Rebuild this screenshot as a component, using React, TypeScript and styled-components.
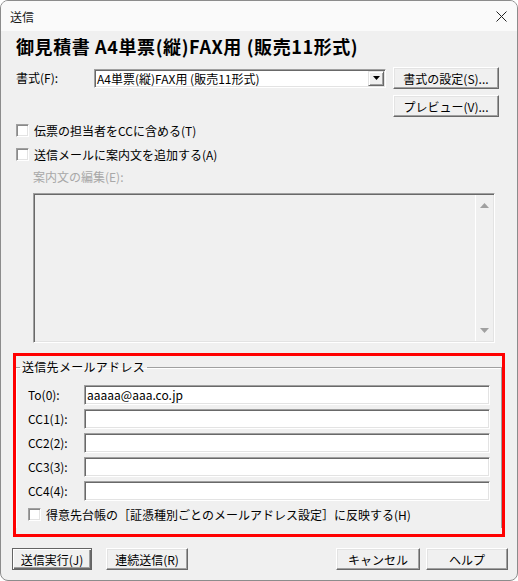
import React from 'react';
import styled, { createGlobalStyle } from 'styled-components';

const GlobalStyle = createGlobalStyle`
  html, body {
    margin: 0;
    padding: 0;
    background: #ffffff;
  }
  body {
    font-family: "Noto Sans CJK JP", "Liberation Sans", sans-serif;
    font-size: 12px;
    color: #000;
  }
`;

const Window = styled.div`
  width: 518px;
  height: 581px;
  box-sizing: border-box;
  border: 1px solid #8c8c8c;
  border-radius: 8px;
  background: #f0f0f0;
  overflow: hidden;
  display: flex;
  flex-direction: column;
`;

const TitleBar = styled.div`
  height: 30px;
  flex-shrink: 0;
  display: flex;
  align-items: center;
  justify-content: space-between;
  padding: 0 9px 0 9px;
  background: #fafafa;
  font-size: 12px;
  color: #1a1a1a;
`;

const CloseIcon = styled.svg`
  width: 11px;
  height: 11px;
  margin-right: 1px;
`;

const Heading = styled.h1`
  margin: 3px 0 0 15px;
  height: 24px;
  line-height: 24px;
  font-size: 18px;
  font-weight: 700;
  letter-spacing: 0.6px;
  white-space: nowrap;
`;

const TopGrid = styled.div`
  display: grid;
  grid-template-columns: 71px 292px 106px;
  grid-template-rows: 22px 22px;
  column-gap: 7px;
  row-gap: 6px;
  align-items: center;
  margin: 9px 0 0 15px;
`;

const FieldLabel = styled.span`
  white-space: nowrap;
  line-height: 20px;
`;

const Combo = styled.div`
  height: 19px;
  box-sizing: border-box;
  display: flex;
  align-items: stretch;
  background: #fff;
  border: 1px solid;
  border-color: #a0a0a0 #fff #fff #a0a0a0;
  box-shadow: inset 1px 1px 0 #696969, inset -1px -1px 0 #e3e3e3;
`;

const ComboText = styled.span`
  flex: 1;
  padding-left: 2px;
  line-height: 17px;
  white-space: nowrap;
  overflow: hidden;
`;

const DropButton = styled.span`
  width: 16px;
  margin: 1px 1px 1px 0;
  box-sizing: border-box;
  display: flex;
  align-items: center;
  justify-content: center;
  background: #f0f0f0;
  border: 1px solid;
  border-color: #e3e3e3 #696969 #696969 #e3e3e3;
  box-shadow: inset 1px 1px 0 #fff, inset -1px -1px 0 #a0a0a0;
`;

const Button = styled.button<{ $width: number; $default?: boolean }>`
  width: ${p => p.$width}px;
  height: 22px;
  box-sizing: border-box;
  padding: 0;
  background: #f0f0f0;
  font-family: inherit;
  font-size: 12px;
  color: #000;
  white-space: nowrap;
  border: 1px solid;
  border-color: ${p => (p.$default ? '#646464' : '#fff #696969 #696969 #fff')};
  box-shadow: ${p =>
    p.$default
      ? 'inset 1px 1px 0 #fff, inset -1px -1px 0 #696969, inset -2px -2px 0 #a0a0a0'
      : 'inset -1px -1px 0 #a0a0a0, inset 1px 1px 0 #e3e3e3'};
`;

const CheckRow = styled.label<{ $top: number; $left: number }>`
  display: flex;
  align-items: center;
  gap: 5px;
  height: 20px;
  margin: ${p => p.$top}px 0 0 ${p => p.$left}px;
  white-space: nowrap;
`;

const CheckBox = styled.span`
  width: 13px;
  height: 13px;
  flex-shrink: 0;
  box-sizing: border-box;
  background: #fff;
  border: 1px solid;
  border-color: #a0a0a0 #fff #fff #a0a0a0;
  box-shadow: inset 1px 1px 0 #8a8a8a, inset -1px -1px 0 #e3e3e3;
`;

const DisabledLabel = styled.div`
  margin: 3px 0 0 32px;
  height: 20px;
  line-height: 20px;
  color: #a8a8a8;
`;

const MemoBox = styled.div`
  margin: 6px 0 0 32px;
  width: 462px;
  height: 150px;
  box-sizing: border-box;
  display: flex;
  background: #f0f0f0;
  border: 1px solid;
  border-color: #a0a0a0 #fff #fff #a0a0a0;
  box-shadow: inset 1px 1px 0 #696969, inset -1px -1px 0 #e3e3e3;
`;

const MemoArea = styled.div`
  flex: 1;
`;

const ScrollBar = styled.div`
  width: 17px;
  margin: 1px 1px 1px 0;
  display: flex;
  flex-direction: column;
  justify-content: space-between;
  align-items: center;
  border-left: 1px solid #fff;
  padding: 8px 0 8px;
`;

const RedBox = styled.div`
  margin: 10px 0 0 12px;
  width: 492px;
  height: 184px;
  box-sizing: border-box;
  border: 3px solid #ff0000;
`;

const GroupBox = styled.fieldset`
  margin: 3px 0 0 0;
  padding: 0 0 4px 4px;
  border: none;
  border-top: 1px solid #a0a0a0;
  border-right: 1px solid #a0a0a0;
  box-shadow: inset 1px 1px 0 #fff;
  min-width: 0;
`;

const Legend = styled.legend`
  padding: 0 2px;
  line-height: 16px;
  font-size: 12px;
  letter-spacing: 0.3px;
`;

const AddressGrid = styled.div`
  display: grid;
  grid-template-columns: 56px 406px;
  grid-auto-rows: 20px;
  row-gap: 4px;
  align-items: center;
  margin: 10px 0 0 8px;
`;

const TextInput = styled.div`
  height: 20px;
  box-sizing: border-box;
  padding-left: 2px;
  line-height: 18px;
  background: #fff;
  border: 1px solid;
  border-color: #a0a0a0 #fff #fff #a0a0a0;
  box-shadow: inset 1px 1px 0 #696969, inset -1px -1px 0 #e3e3e3;
`;

const Footer = styled.div`
  display: flex;
  align-items: center;
  margin-top: 11px;
  padding: 0 9px 0 11px;
`;

const Spacer = styled.div<{ $width?: number }>`
  ${p => (p.$width ? `width: ${p.$width}px;` : 'flex: 1;')}
`;

const Arrow = ({ dir, color, w = 9, h = 5 }: { dir: 'up' | 'down'; color: string; w?: number; h?: number }) => (
  <svg width={w} height={h} viewBox={`0 0 ${w} ${h}`}>
    <polygon
      points={dir === 'up' ? `${w / 2},0 ${w},${h} 0,${h}` : `0,0 ${w},0 ${w / 2},${h}`}
      fill={color}
    />
  </svg>
);

const addresses = [
  { label: 'To(0):', value: 'aaaaa@aaa.co.jp' },
  { label: 'CC1(1):', value: '' },
  { label: 'CC2(2):', value: '' },
  { label: 'CC3(3):', value: '' },
  { label: 'CC4(4):', value: '' },
];

export default function App() {
  return (
    <>
      <GlobalStyle />
      <Window>
        <TitleBar>
          <span>送信</span>
          <CloseIcon viewBox="0 0 11 11">
            <path d="M0.5 0.5 L10.5 10.5 M10.5 0.5 L0.5 10.5" stroke="#222" strokeWidth="1" />
          </CloseIcon>
        </TitleBar>

        <Heading>御見積書 A4単票(縦)FAX用 (販売11形式)</Heading>

        <TopGrid>
          <FieldLabel>書式(F):</FieldLabel>
          <Combo>
            <ComboText>A4単票(縦)FAX用 (販売11形式)</ComboText>
            <DropButton>
              <Arrow dir="down" color="#000" w={7} h={4} />
            </DropButton>
          </Combo>
          <Button $width={106}>書式の設定(S)...</Button>
          <span />
          <span />
          <Button $width={106}>プレビュー(V)...</Button>
        </TopGrid>

        <CheckRow $top={3} $left={15}>
          <CheckBox />
          伝票の担当者をCCに含める(T)
        </CheckRow>
        <CheckRow $top={4} $left={15}>
          <CheckBox />
          送信メールに案内文を追加する(A)
        </CheckRow>

        <DisabledLabel>案内文の編集(E):</DisabledLabel>
        <MemoBox>
          <MemoArea />
          <ScrollBar>
            <Arrow dir="up" color="#a0a0a0" />
            <Arrow dir="down" color="#a0a0a0" />
          </ScrollBar>
        </MemoBox>

        <RedBox>
          <GroupBox>
            <Legend>送信先メールアドレス</Legend>
            <AddressGrid>
              {addresses.map(a => (
                <React.Fragment key={a.label}>
                  <FieldLabel>{a.label}</FieldLabel>
                  <TextInput>{a.value}</TextInput>
                </React.Fragment>
              ))}
            </AddressGrid>
            <CheckRow $top={3} $left={8}>
              <CheckBox />
              得意先台帳の［証憑種別ごとのメールアドレス設定］に反映する(H)
            </CheckRow>
          </GroupBox>
        </RedBox>

        <Footer>
          <Button $width={80} $default>送信実行(J)</Button>
          <Spacer $width={14} />
          <Button $width={82}>連続送信(R)</Button>
          <Spacer />
          <Button $width={84}>キャンセル</Button>
          <Spacer $width={6} />
          <Button $width={82}>ヘルプ</Button>
        </Footer>
      </Window>
    </>
  );
}
